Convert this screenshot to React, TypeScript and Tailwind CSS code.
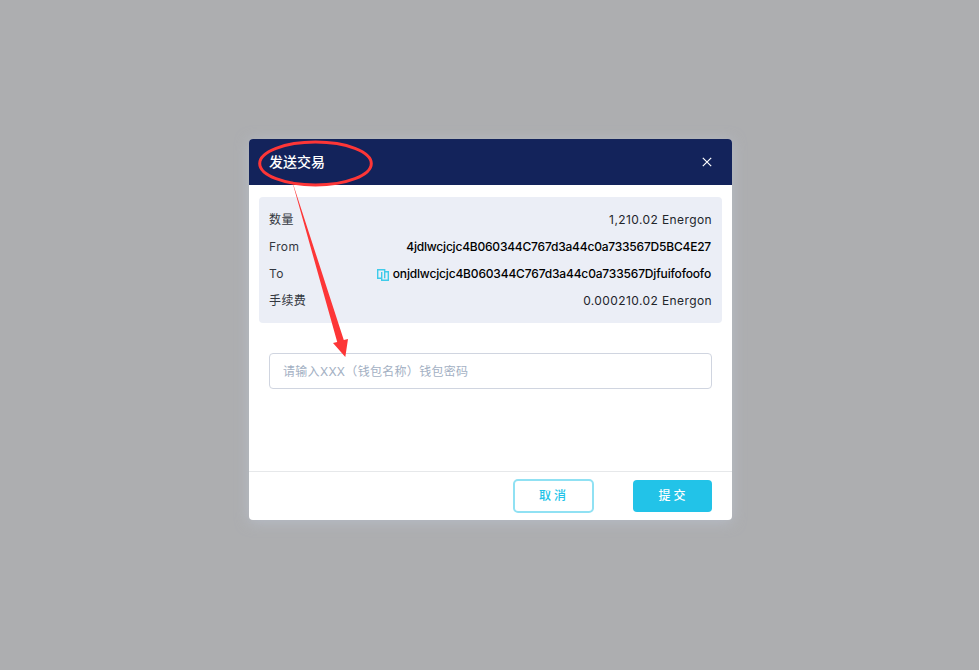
import React from "react";

function CopyIcon() {
  return (
    <svg width="12" height="12" viewBox="0 0 12 12" fill="none" stroke="#3fcbea" strokeWidth="1.4" className="mr-1 mt-0.5 shrink-0">
      <path d="M4.7 9.3H.7V.7h7v8.6" />
      <path d="M4.7 3v8.3h6.6V2.7H7.7" />
    </svg>
  );
}

function Row({ label, children }: { label: string; children: React.ReactNode }) {
  return (
    <div className="flex h-[27px] items-center justify-between whitespace-nowrap">
      <span className="tracking-[0.4px] text-[#333740]">{label}</span>
      {children}
    </div>
  );
}

export default function App() {
  return (
    <main className="flex h-[670px] w-[979px] justify-center overflow-hidden bg-[#adaeb0] pl-0.5 pt-[139px] font-['Inter','Noto_Sans_CJK_SC',sans-serif] text-xs">
      <section className="relative flex h-[381px] w-[483px] flex-col rounded bg-white shadow-[0_2px_14px_rgba(190,198,215,0.6)]">
        <header className="flex h-[46px] shrink-0 items-center justify-between rounded-t bg-[#13235b] px-5 text-white">
          <h1 className="text-sm font-medium">发送交易</h1>
          <svg width="10" height="10" viewBox="0 0 10 10" stroke="currentColor" strokeWidth="1.2">
            <path d="M.8.8l8.4 8.4M9.2.8L.8 9.2" />
          </svg>
        </header>
        <div className="mx-2.5 mt-3 h-[126px] shrink-0 rounded bg-[#ebeef6] px-2.5 pt-[9px]">
          <Row label="数量">
            <span className="tracking-[0.4px] text-[#22252b]">1,210.02 Energon</span>
          </Row>
          <Row label="From">
            <span className="pr-px font-medium tracking-[-0.21px] text-black">4jdlwcjcjc4B060344C767d3a44c0a733567D5BC4E27</span>
          </Row>
          <Row label="To">
            <span className="flex items-center pr-px font-medium tracking-[-0.17px] text-black">
              <CopyIcon />
              onjdlwcjcjc4B060344C767d3a44c0a733567Djfuifofoofo
            </span>
          </Row>
          <Row label="手续费">
            <span className="tracking-[0.4px] text-[#22252b]">0.000210.02 Energon</span>
          </Row>
        </div>
        <input
          className="mx-5 mt-[30px] h-9 shrink-0 rounded border border-[#d0d5e0] px-[13px] tracking-[0.3px] outline-none placeholder:text-[#a3b0c3]"
          placeholder="请输入XXX（钱包名称）钱包密码"
        />
        <footer className="mt-auto flex h-[49px] items-start justify-end border-t border-[#e6e8ea] px-5 pt-[7px] font-medium">
          <button className="mr-[39px] h-[34px] w-[81px] rounded-[5px] border-2 border-[#90e1f3] pr-0.5 text-[#22c3e8]">取 消</button>
          <button className="mt-px h-8 w-[79px] rounded bg-[#22c3e8] pr-px text-white">提 交</button>
        </footer>
        <svg className="pointer-events-none absolute left-0 top-0" width="140" height="225" viewBox="249 139 140 225">
          <ellipse cx="315.5" cy="163.5" rx="55.8" ry="21.5" fill="none" stroke="#fd3637" strokeWidth="3" />
          <path d="M291.5 179L343.8 340l4.2-1-2.7 18-12.3-14 4.2-1Z" fill="#fd3637" />
        </svg>
      </section>
    </main>
  );
}
